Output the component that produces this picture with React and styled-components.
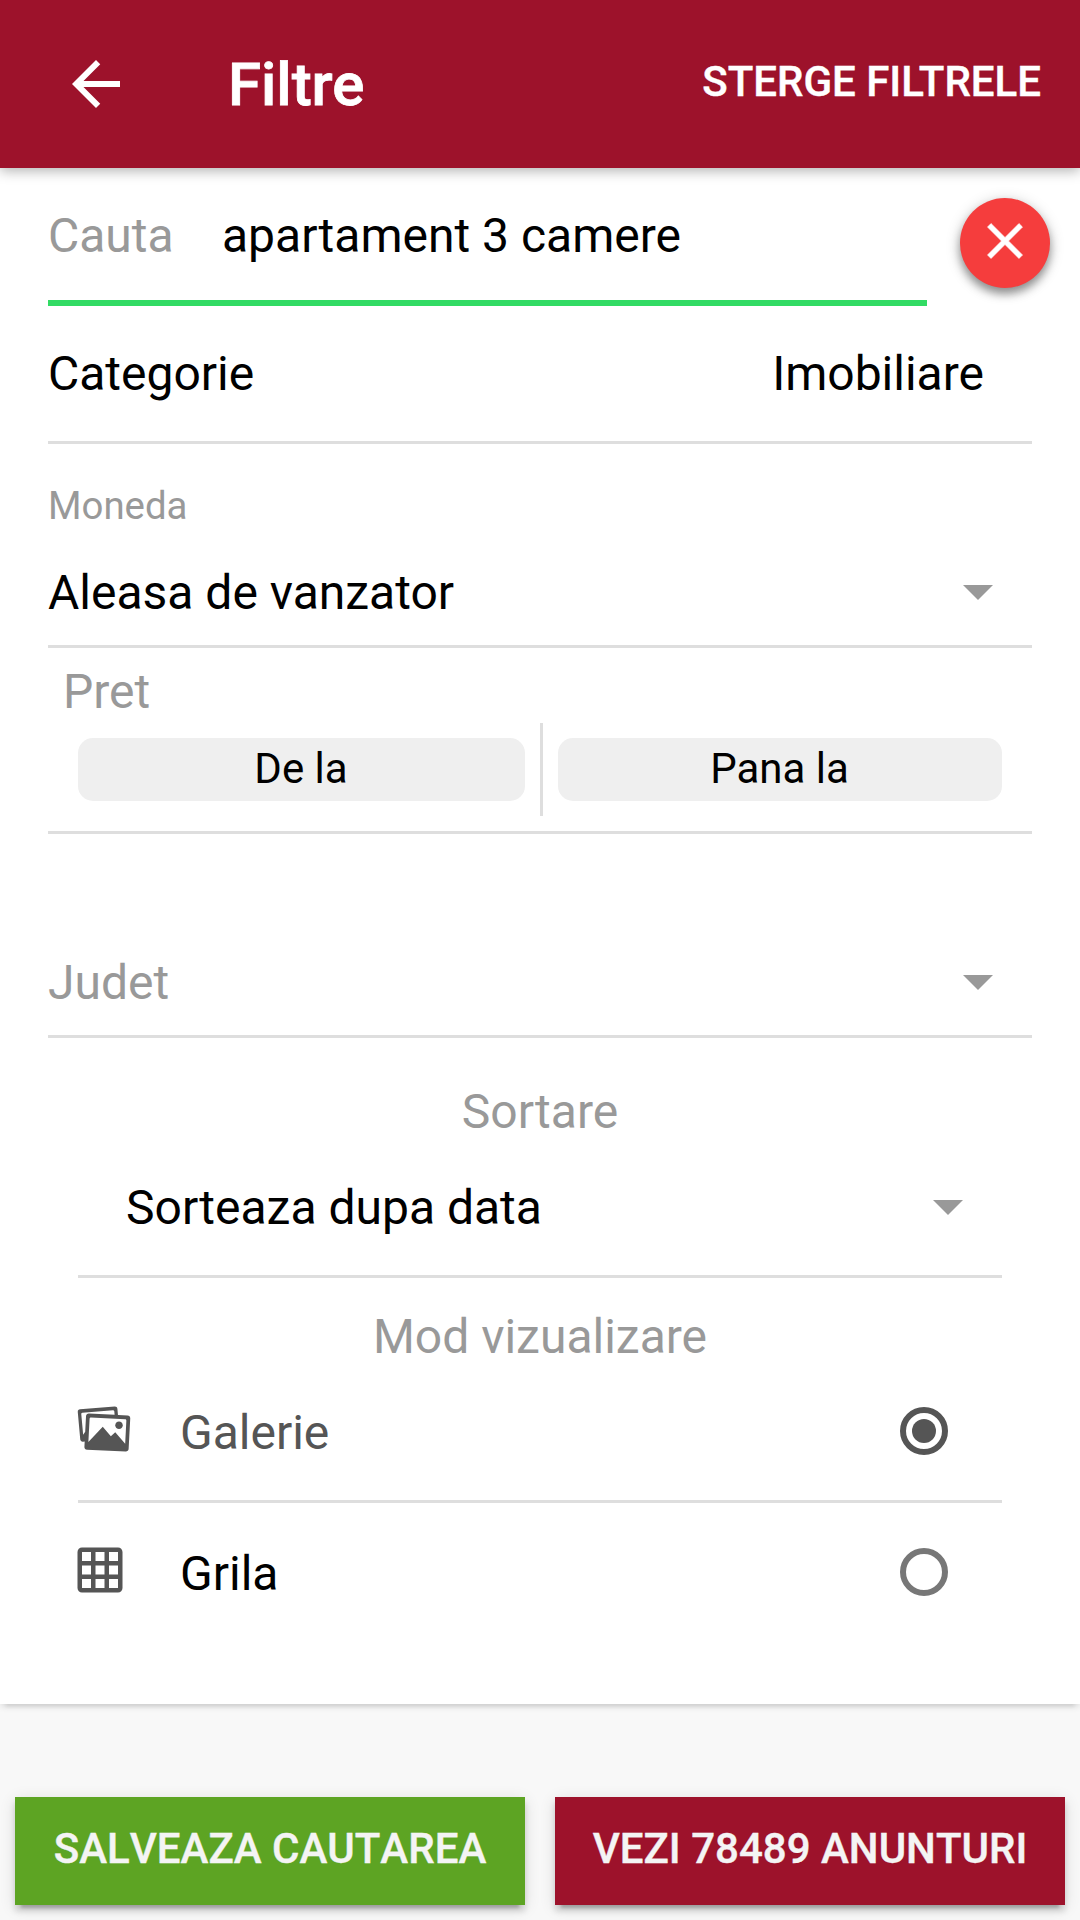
import { useState } from "react";
import styled, { createGlobalStyle } from "styled-components";
import { IoMdImages, IoMdGrid } from "react-icons/io";
import { MdArrowBack, MdClose } from "react-icons/md";

export default function App() {
    const [mod, setMod] = useState("galerie");
    const [cauta, setCauta] = useState("apartament 3 camere");
    return (
        <>
            <GlobalStyle/>
            <Page>
                <Header>
                    <BackButton aria-label="Inapoi"><MdArrowBack/></BackButton>
                    <h1>Filtre</h1>
                    <ClearButton>STERGE FILTRELE</ClearButton>
                </Header>
                <Card>
                    <SearchRow>
                        <SearchField>
                            <span>Cauta</span>
                            <input value={cauta} onChange={(e) => setCauta(e.target.value)}/>
                        </SearchField>
                        <Fab aria-label="Sterge" onClick={() => setCauta("")}><MdClose/></Fab>
                    </SearchRow>
                    <Row>
                        <span>Categorie</span>
                        <Value>Imobiliare</Value>
                    </Row>
                    <StackedRow>
                        <small>Moneda</small>
                        <SelectLine>
                            <span>Aleasa de vanzator</span>
                            <Caret/>
                        </SelectLine>
                    </StackedRow>
                    <PriceRow>
                        <PriceTitle>Pret</PriceTitle>
                        <Range>
                            <RangeButton>De la</RangeButton>
                            <Separator/>
                            <RangeButton>Pana la</RangeButton>
                        </Range>
                    </PriceRow>
                    <CountyRow>
                        <span>Judet</span>
                        <Caret/>
                    </CountyRow>
                    <SectionTitle $height={102} $top={45}>Sortare</SectionTitle>
                    <SortRow>
                        <span>Sorteaza dupa data</span>
                        <Caret/>
                    </SortRow>
                    <SectionTitle $height={84} $top={30}>Mod vizualizare</SectionTitle>
                    {modArray.map(({icon,label,value,shift})=>(
                        <ModeRow key={value} onClick={() => setMod(value)} $active={mod === value}>
                            <ModeIcon $shift={shift}>{icon}</ModeIcon>
                            <span>{label}</span>
                            <Radio $active={mod === value}/>
                        </ModeRow>
                    ))}
                </Card>
                <Footer>
                    <ActionButton $bg="#5da423">SALVEAZA CAUTAREA</ActionButton>
                    <ActionButton $bg="#9d122b">VEZI 78489 ANUNTURI</ActionButton>
                </Footer>
            </Page>
        </>
    )
}

//#region data mod vizualizare
const modArray=[
    {
    label:"Galerie",
    icon:<IoMdImages/>,
    value:"galerie",
    shift:4
    },
    {
    label:"Grila",
    icon:<IoMdGrid/>,
    value:"grila",
    shift:8
    }
]
//#endregion

//#region Styled components
const GlobalStyle = createGlobalStyle`
  *{
    box-sizing: border-box;
  }
  body{
    margin: 0;
    background: #f8f8f8;
    font-family: Roboto, "Liberation Sans", sans-serif;
  }
  button, input{
    border: none;
    padding: 0;
    margin: 0;
    background: none;
    outline: none;
    font-family: inherit;
    color: inherit;
  }
  svg{
    display: block;
  }
`;

const Page = styled.div`
  width: 1080px;
  height: 1920px;
  display: flex;
  flex-direction: column;
  overflow: hidden;
  font-size: 48px;
  line-height: 57px;
  color: #000;
`;

const Header = styled.header`
  position: relative;
  z-index: 1;
  flex: none;
  display: flex;
  align-items: flex-start;
  height: 168px;
  padding: 48px 39px 0 60px;
  background: #9d122b;
  color: #fff;
  box-shadow: 0 3px 12px rgba(0, 0, 0, 0.3);
  h1{
    flex: 1;
    margin: 1px 0 0 96px;
    font-size: 60px;
    line-height: 71px;
    font-weight: 500;
    -webkit-text-stroke: 0.8px #fff;
  }
`;

const BackButton = styled.button`
  font-size: 72px;
`;

const ClearButton = styled.button`
  margin-top: 9px;
  font-size: 42px;
  line-height: 49px;
  font-weight: 500;
  -webkit-text-stroke: 0.4px #fff;
`;

const Card = styled.main`
  flex: none;
  height: 1536px;
  background: #fff;
  box-shadow: 0 4px 6px -1px rgba(0, 0, 0, 0.12), 0 9px 3px -6px rgba(0, 0, 0, 0.06);
`;

const SearchRow = styled.div`
  display: flex;
  padding-left: 48px;
`;

const SearchField = styled.label`
  display: flex;
  width: 879px;
  height: 138px;
  padding-top: 39px;
  border-bottom: 6px solid #32db64;
  span{
    width: 174px;
    color: #999;
  }
  input{
    flex: 1;
    min-width: 0;
    height: 57px;
    font-size: 48px;
    line-height: 57px;
  }
`;

const Fab = styled.button`
  display: flex;
  justify-content: center;
  width: 90px;
  height: 90px;
  margin: 30px 0 0 33px;
  padding-top: 13px;
  border-radius: 50%;
  background: #f53d3d;
  color: #fff;
  font-size: 60px;
  box-shadow: 0 6px 9px rgba(0, 0, 0, 0.35), 0 3px 15px rgba(0, 0, 0, 0.2);
  path:last-child{
    stroke: #fff;
    stroke-width: 0.25px;
  }
  path[fill="none"]{
    stroke: none;
  }
`;

const Row = styled.div`
  display: flex;
  justify-content: space-between;
  height: 138px;
  margin: 0 48px;
  padding-top: 39px;
  border-bottom: 3px solid #dedede;
`;

const Value = styled.span`
  margin-right: 48px;
`;

const Caret = styled.i`
  margin: 21px 39px 0 0;
  width: 30px;
  height: 15px;
  background: #999;
  clip-path: polygon(0 0, 100% 0, 50% 100%);
`;

const StackedRow = styled(Row)`
  flex-direction: column;
  justify-content: flex-start;
  height: 204px;
  small{
    font-size: 38.4px;
    line-height: 45px;
    color: #999;
  }
`;

const SelectLine = styled.div`
  display: flex;
  justify-content: space-between;
  margin-top: 36px;
`;

const PriceRow = styled(Row)`
  display: block;
  height: 186px;
  padding-top: 15px;
`;

const PriceTitle = styled.div`
  padding-left: 15px;
  color: #999;
`;

const Range = styled.div`
  display: grid;
  grid-template-columns: 447px 3px 444px;
  column-gap: 15px;
  align-items: center;
  height: 93px;
  margin: 3px 30px 0;
`;

const RangeButton = styled.button`
  height: 63px;
  padding: 0 1px 2px 0;
  border-radius: 15px;
  background: #efefef;
  font-size: 42px;
  line-height: 49px;
`;

const Separator = styled.div`
  height: 93px;
  background: #dedede;
`;

const CountyRow = styled(Row)`
  height: 204px;
  padding-top: 120px;
  color: #999;
`;

const SectionTitle = styled.div`
  height: ${(props) => props.$height}px;
  padding-top: ${(props) => props.$top}px;
  text-align: center;
  color: #999;
`;

const SortRow = styled(Row)`
  margin: 0 78px;
  padding-left: 48px;
`;

const ModeRow = styled.div`
  display: flex;
  height: 141px;
  margin: 0 78px;
  padding-top: 42px;
  color: ${({ $active }) => ($active ? `#555` : `#000`)};
  border-bottom: 3px solid #dedede;
  &:last-child{
    border-bottom: none;
  }
  span{
    flex: 1;
  }
`;

const ModeIcon = styled.div`
  width: ${(props) => 102 + props.$shift}px;
  margin: -5px 0 0 -${(props) => props.$shift}px;
  font-size: 60px;
  color: #555;
`;

const Radio = styled.div`
  width: 48px;
  height: 48px;
  margin: 3px 54px 0 0;
  padding: 6px;
  border: 6px solid ${({ $active }) => ($active ? `#555` : `#777`)};
  border-radius: 50%;
  background: ${({ $active }) => ($active ? `#555` : `transparent`)} content-box;
`;

const Footer = styled.footer`
  display: grid;
  grid-template-columns: 1fr 1fr;
  gap: 30px;
  padding: 93px 15px 15px;
`;

const ActionButton = styled.button`
  height: 108px;
  padding-bottom: 6px;
  background: ${(props) => props.$bg};
  color: #f4f4f4;
  font-size: 42px;
  line-height: 49px;
  font-weight: 500;
  font-kerning: none;
  -webkit-text-stroke: 0.4px #f4f4f4;
  box-shadow: 0 6px 6px rgba(0, 0, 0, 0.14), 0 9px 3px -6px rgba(0, 0, 0, 0.2), 0 3px 15px rgba(0, 0, 0, 0.12);
`;
//#endregion
